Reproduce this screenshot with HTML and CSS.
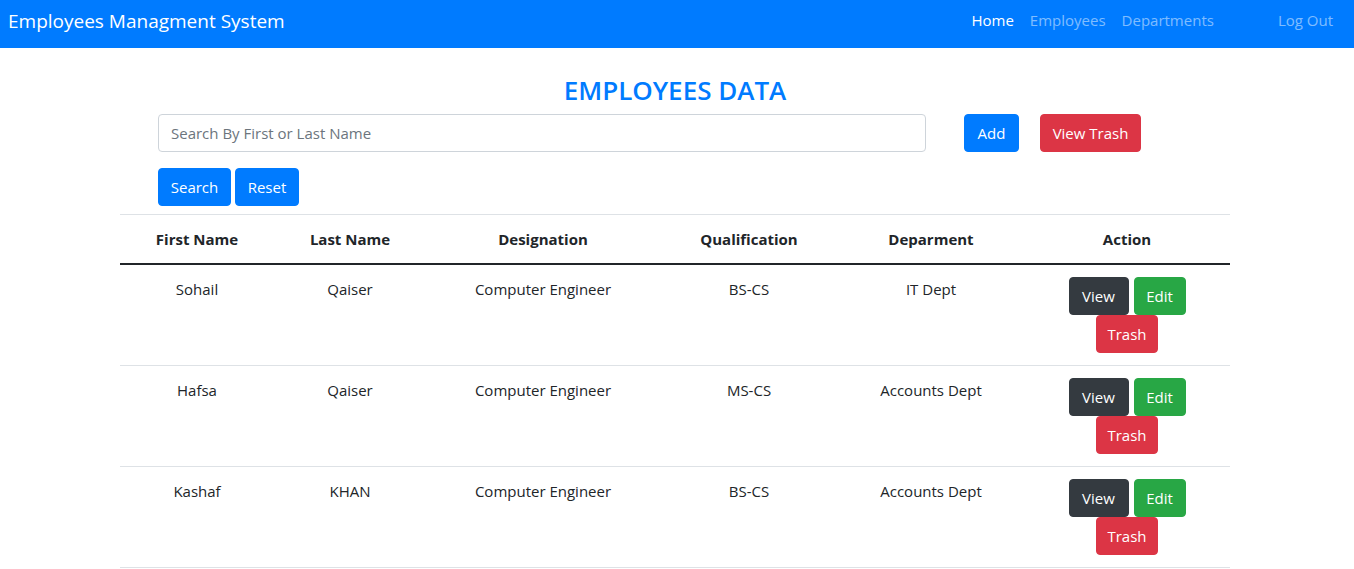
FILE: index.html
```html
<!DOCTYPE html>
<html lang="en">
<head>
<meta charset="utf-8">
<title>Employees Managment System</title>
<link rel="stylesheet" href="styles.css">
</head>
<body>
<nav class="navbar">
  <a class="brand" href="#">Employees Managment System</a>
  <ul class="nav">
    <li><a class="nav-link active" href="#">Home</a></li>
    <li><a class="nav-link" href="#">Employees</a></li>
    <li><a class="nav-link" href="#">Departments</a></li>
    <li class="logout"><a class="nav-link" href="#">Log Out</a></li>
  </ul>
</nav>
<main class="container">
  <h3 class="title">EMPLOYEES DATA</h3>
  <div class="toolbar">
    <input class="search-input" type="text" placeholder="Search By First or Last Name">
    <button class="btn btn-primary btn-add">Add</button>
    <button class="btn btn-danger btn-trash-view">View Trash</button>
  </div>
  <div class="search-actions">
    <button class="btn btn-primary">Search</button>
    <button class="btn btn-primary">Reset</button>
  </div>
  <table class="table">
    <colgroup>
      <col class="c1"><col class="c2"><col class="c3"><col class="c4"><col class="c5"><col class="c6">
    </colgroup>
    <thead>
      <tr><th>First Name</th><th>Last Name</th><th>Designation</th><th>Qualification</th><th>Deparment</th><th>Action</th></tr>
    </thead>
    <tbody>
      <tr>
        <td>Sohail</td><td>Qaiser</td><td>Computer Engineer</td><td>BS-CS</td><td>IT Dept</td>
        <td><div class="actions"><div class="act-row"><button class="btn btn-dark">View</button><button class="btn btn-success">Edit</button></div><div class="act-row"><button class="btn btn-danger">Trash</button></div></div></td>
      </tr>
      <tr>
        <td>Hafsa</td><td>Qaiser</td><td>Computer Engineer</td><td>MS-CS</td><td>Accounts Dept</td>
        <td><div class="actions"><div class="act-row"><button class="btn btn-dark">View</button><button class="btn btn-success">Edit</button></div><div class="act-row"><button class="btn btn-danger">Trash</button></div></div></td>
      </tr>
      <tr>
        <td>Kashaf</td><td>KHAN</td><td>Computer Engineer</td><td>BS-CS</td><td>Accounts Dept</td>
        <td><div class="actions"><div class="act-row"><button class="btn btn-dark">View</button><button class="btn btn-success">Edit</button></div><div class="act-row"><button class="btn btn-danger">Trash</button></div></div></td>
      </tr>
    </tbody>
  </table>
</main>
</body>
</html>
```
FILE: styles.css
```css
* { box-sizing: border-box; }
html, body { margin: 0; padding: 0; }
body {
  font-family: "Open Sans", "Noto Sans", sans-serif;
  font-size: 15px;
  line-height: 24px;
  color: #212529;
  background: #fff;
}
.navbar {
  height: 48px;
  background: #007bff;
  display: flex;
  align-items: center;
  justify-content: space-between;
  padding: 0 12px 0 8px;
}
.brand {
  color: #fff;
  font-size: 19px;
  text-decoration: none;
  line-height: 30px;
  margin-top: -6px;
}
.nav {
  list-style: none;
  margin: 0;
  padding: 0;
  display: flex;
  margin-top: -8px;
  margin-right: 1px;
}
.nav-link {
  display: block;
  padding: 0 8px;
  color: rgba(255,255,255,.5);
  text-decoration: none;
  font-size: 15px;
  line-height: 24px;
}
.nav-link.active { color: #fff; }
.logout { margin-left: 48px; }
.container {
  width: 1110px;
  margin-left: calc(50% - 557px);
}
.title {
  margin: 25px 0 7px;
  text-align: center;
  color: #007bff;
  font-size: 26px;
  font-weight: 600;
  line-height: 34px;
}
.toolbar {
  display: flex;
  align-items: center;
  padding-left: 38px;
}
.search-input {
  width: 768px;
  height: 38px;
  padding: 6px 12px;
  border: 1px solid #ced4da;
  border-radius: 4px;
  font-family: inherit;
  font-size: 15px;
  color: #495057;
}
.search-input::placeholder { color: #6c757d; }
.btn {
  display: inline-block;
  height: 38px;
  padding: 6px 12px;
  border: 1px solid transparent;
  border-radius: 4px;
  font-family: inherit;
  font-size: 15px;
  line-height: 24px;
  color: #fff;
  cursor: pointer;
}
.btn-primary { background: #007bff; border-color: #007bff; }
.btn-danger { background: #dc3545; border-color: #dc3545; }
.btn-dark { background: #343a40; border-color: #343a40; }
.btn-success { background: #28a745; border-color: #28a745; }
.btn-add { margin-left: 38px; width: 55px; padding: 6px 0; }
.btn-trash-view { margin-left: 21px; width: 101px; padding: 6px 0; }
.search-actions {
  display: flex;
  gap: 4px;
  padding-left: 38px;
  margin-top: 16px;
  margin-bottom: 8px;
}
.search-actions .btn:first-child { width: 73px; padding: 6px 0; }
.search-actions .btn:last-child { width: 64px; padding: 6px 0; }
.table {
  width: 1110px;
  border-collapse: collapse;
  table-layout: fixed;
}
.c1 { width: 154px; }
.c2 { width: 152px; }
.c3 { width: 234px; }
.c4 { width: 178px; }
.c5 { width: 186px; }
.c6 { width: 206px; }
.table th, .table td {
  padding: 12px;
  text-align: center;
  vertical-align: top;
  border-top: 1px solid #dee2e6;
}
.table tbody tr:last-child td { border-bottom: 1px solid #dee2e6; }
.table th { font-weight: 700; }
.table thead th { border-bottom: 2px solid #212529; }
.actions {
  display: flex;
  flex-direction: column;
  align-items: center;
}
.act-row {
  display: flex;
  gap: 5px;
  justify-content: center;
}
.act-row .btn-dark { width: 60px; padding: 6px 0; }
.act-row .btn-success { width: 52px; padding: 6px 0; }
.act-row .btn-danger { width: 62px; padding: 6px 0; }
```
